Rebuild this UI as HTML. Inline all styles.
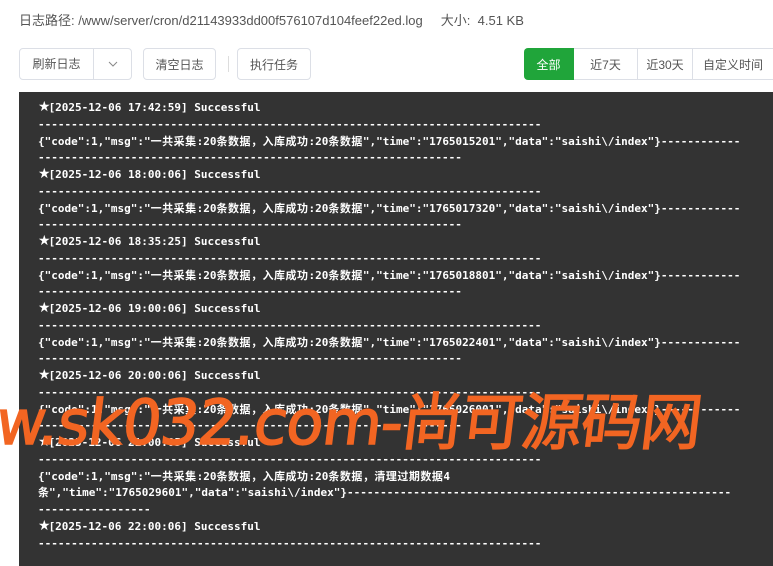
<!DOCTYPE html>
<html><head><meta charset="utf-8"><style>
*{margin:0;padding:0;box-sizing:border-box}
body{width:773px;height:566px;overflow:hidden;background:#fff;font-family:"Liberation Sans","Noto Sans CJK SC",sans-serif;position:relative}
.top{position:absolute;left:19px;top:10px;font-size:13px;color:#555;white-space:nowrap}
.btn{position:absolute;top:48px;height:32px;border:1px solid #dcdfe6;border-radius:4px;font-size:12px;color:#555;display:flex;align-items:center;justify-content:center}
.seg{position:absolute;top:48px;left:524px;height:32px;display:flex;font-size:12px;color:#555}
.seg div{height:32px;display:flex;align-items:center;justify-content:center;border:1px solid #dcdfe6;border-left:none}
.log{position:absolute;left:19px;top:92px;width:754px;height:474px;background:#333;color:#fff;font-family:"DejaVu Sans Mono","Noto Sans CJK SC",monospace;font-weight:bold;font-size:11px;line-height:16.75px;padding:8px 0 0 19px;white-space:pre;overflow:hidden}
.s{font-size:14px;line-height:10px;font-family:"DejaVu Sans",sans-serif;letter-spacing:-2px}
.c{letter-spacing:0.5px}
.wm{position:absolute;left:-8px;top:372px;font-family:"DejaVu Sans","Noto Sans CJK SC",sans-serif;font-size:62px;color:#f26522;-webkit-text-stroke:1.5px #f26522;white-space:nowrap;letter-spacing:-1px;transform:scaleX(0.98) skewX(-7deg);transform-origin:left bottom}
</style></head><body>
<div class="top">日志路径: /www/server/cron/d21143933dd00f576107d104feef22ed.log&nbsp;&nbsp;&nbsp;&nbsp;&nbsp;大小:&nbsp;&nbsp;4.51 KB</div>
<div class="btn" style="left:19px;width:113px;justify-content:flex-start"><span style="width:74px;text-align:center;border-right:1px solid #dcdfe6;line-height:30px">刷新日志</span><span style="flex:1;display:flex;justify-content:center"><svg width="10" height="6" viewBox="0 0 10 6"><path d="M1 1L5 5L9 1" fill="none" stroke="#888" stroke-width="1"/></svg></span></div>
<div class="btn" style="left:143px;width:73px">清空日志</div>
<div style="position:absolute;left:228px;top:56px;width:1px;height:16px;background:#ddd"></div>
<div class="btn" style="left:237px;width:74px">执行任务</div>
<div class="seg"><div style="width:50px;background:#20a53a;color:#fff;border-color:#20a53a;border-radius:4px 0 0 4px">全部</div><div style="width:64px">近7天</div><div style="width:55px">近30天</div><div style="width:80px;border-right:none">自定义时间</div></div>
<div class="log"><span class="s">★</span>[2025-12-06 17:42:59] Successful
----------------------------------------------------------------------------
{"code":1,"msg":"<span class="c">一共采集</span>:20<span class="c">条数据，入库成功</span>:20<span class="c">条数据</span>","time":"1765015201","data":"saishi\/index"}------------
----------------------------------------------------------------
<span class="s">★</span>[2025-12-06 18:00:06] Successful
----------------------------------------------------------------------------
{"code":1,"msg":"<span class="c">一共采集</span>:20<span class="c">条数据，入库成功</span>:20<span class="c">条数据</span>","time":"1765017320","data":"saishi\/index"}------------
----------------------------------------------------------------
<span class="s">★</span>[2025-12-06 18:35:25] Successful
----------------------------------------------------------------------------
{"code":1,"msg":"<span class="c">一共采集</span>:20<span class="c">条数据，入库成功</span>:20<span class="c">条数据</span>","time":"1765018801","data":"saishi\/index"}------------
----------------------------------------------------------------
<span class="s">★</span>[2025-12-06 19:00:06] Successful
----------------------------------------------------------------------------
{"code":1,"msg":"<span class="c">一共采集</span>:20<span class="c">条数据，入库成功</span>:20<span class="c">条数据</span>","time":"1765022401","data":"saishi\/index"}------------
----------------------------------------------------------------
<span class="s">★</span>[2025-12-06 20:00:06] Successful
----------------------------------------------------------------------------
{"code":1,"msg":"<span class="c">一共采集</span>:20<span class="c">条数据，入库成功</span>:20<span class="c">条数据</span>","time":"1765026001","data":"saishi\/index"}------------
----------------------------------------------------------------
<span class="s">★</span>[2025-12-06 21:00:05] Successful
----------------------------------------------------------------------------
{"code":1,"msg":"<span class="c">一共采集</span>:20<span class="c">条数据，入库成功</span>:20<span class="c">条数据，清理过期数据</span>4
条","time":"1765029601","data":"saishi\/index"}----------------------------------------------------------
-----------------
<span class="s">★</span>[2025-12-06 22:00:06] Successful
----------------------------------------------------------------------------
</div>
<div class="wm">w.sk032.com-尚可源码网</div>
</body></html>
